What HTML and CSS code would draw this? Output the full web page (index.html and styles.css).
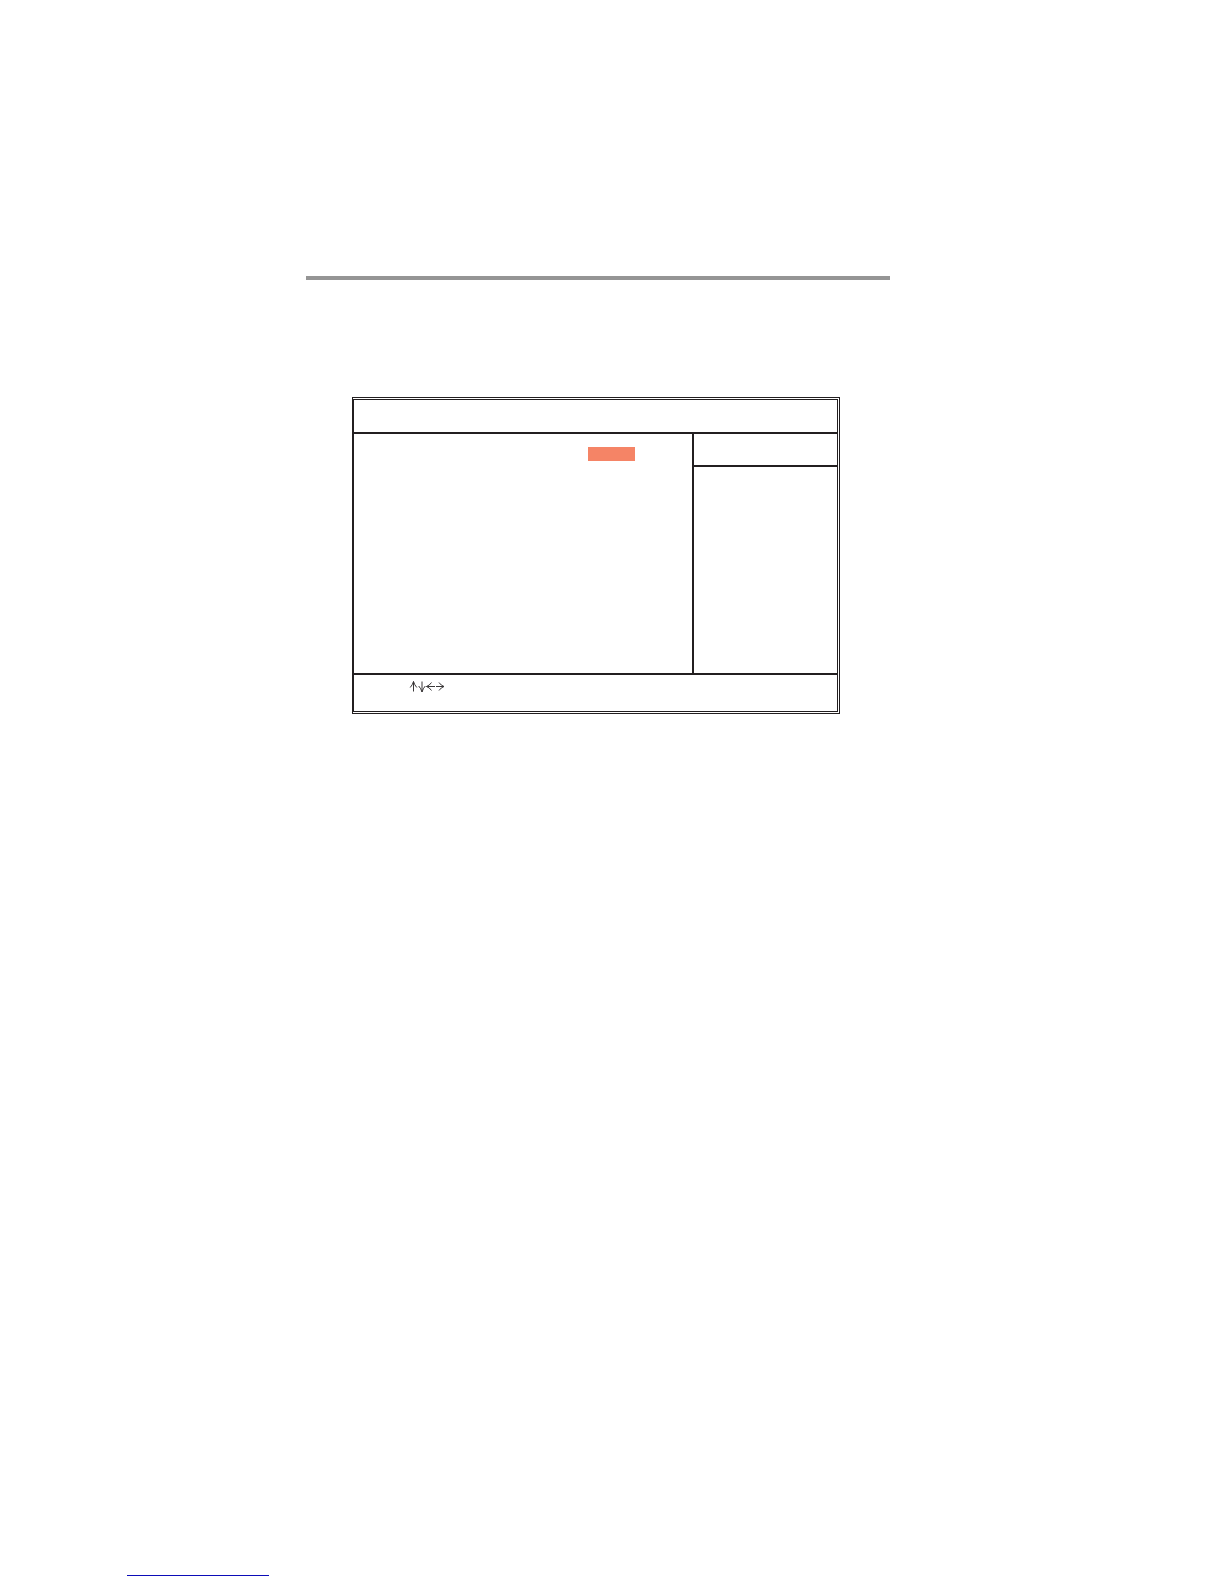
FILE: index.html
```
<!DOCTYPE html>
<html lang="en">
<head>
  <meta charset="UTF-8">
  <meta name="viewport" content="width=device-width, initial-scale=1.0">
  <title>Setup Screen</title>
  <link rel="stylesheet" href="styles.css">
</head>
<body>

  <main class="content">
    <hr class="page-rule">

    <div class="screen">
      <div class="screen-inner">
        <div class="screen-title"></div>

        <div class="screen-body">
          <div class="options">
            <div class="selected"></div>
          </div>
          <div class="help">
            <div class="help-title"></div>
          </div>
        </div>

        <div class="screen-keys">
          <svg class="arrows" width="36" height="12" viewBox="0 0 36 12" role="img" aria-label="Arrow keys">
            <path d="M4.500 10.500V0.500M1.200 6.500Q3.500 4 4.500 0.500Q5.500 4 7.800 6.500"/>
            <path d="M13 0.500V11M9.700 5Q12 7.500 13 11Q14 7.500 16.300 5"/>
            <path d="M26 5.500H17.500M22.500 1.500Q20.500 4.500 17.500 5.500Q20.500 6.500 22.500 9.500"/>
            <path d="M27 5.500H35M30 1.500Q32 4.500 35 5.500Q32 6.500 30 9.500"/>
          </svg>
        </div>
      </div>
    </div>
  </main>

  <footer class="page-footer">
    <a class="footer-link" href="#" aria-label="Home"></a>
  </footer>

</body>
</html>
```
FILE: styles.css
```
* {
  box-sizing: border-box;
}

body {
  margin: 0;
  min-height: 100vh;
  display: flex;
  flex-direction: column;
  justify-content: space-between;
  background-color: #fff;
  color: #231f20;
  font-family: "Liberation Sans", Arial, sans-serif;
}

.content {
  margin: 276px 334px 0 306px;
}

.page-rule {
  height: 4px;
  margin: 0;
  border: none;
  background-color: #959595;
}

/* double frame, the left side is closed up into one thick line */
.screen {
  margin: 117px 50px 0 46px;
  padding: 1px 1px 1px 0;
  border: 1px solid #231f20;
}

.screen-inner {
  border: 1px solid #231f20;
}

.screen-title {
  min-height: 34px;
  border-bottom: 2px solid #231f20;
}

.screen-body {
  display: flex;
  min-height: 239px;
}

.options {
  flex: 1;
  padding-top: 13px;
}

.selected {
  width: 47px;
  height: 14px;
  margin-left: auto;
  margin-right: 57px;
  background-color: #f58466;
}

.help {
  width: 30%;
  border-left: 2px solid #231f20;
}

.help-title {
  min-height: 33px;
  border-bottom: 2px solid #231f20;
}

.screen-keys {
  min-height: 38px;
  padding: 6px 0 0 55px;
  border-top: 2px solid #231f20;
}

.arrows {
  display: block;
  fill: none;
  stroke: #3a3738;
  stroke-width: 1;
}

.page-footer {
  padding: 0 0 8px 127px;
}

.footer-link {
  display: block;
  width: 142px;
  border-bottom: 1px solid #0c0cb8;
}
```
